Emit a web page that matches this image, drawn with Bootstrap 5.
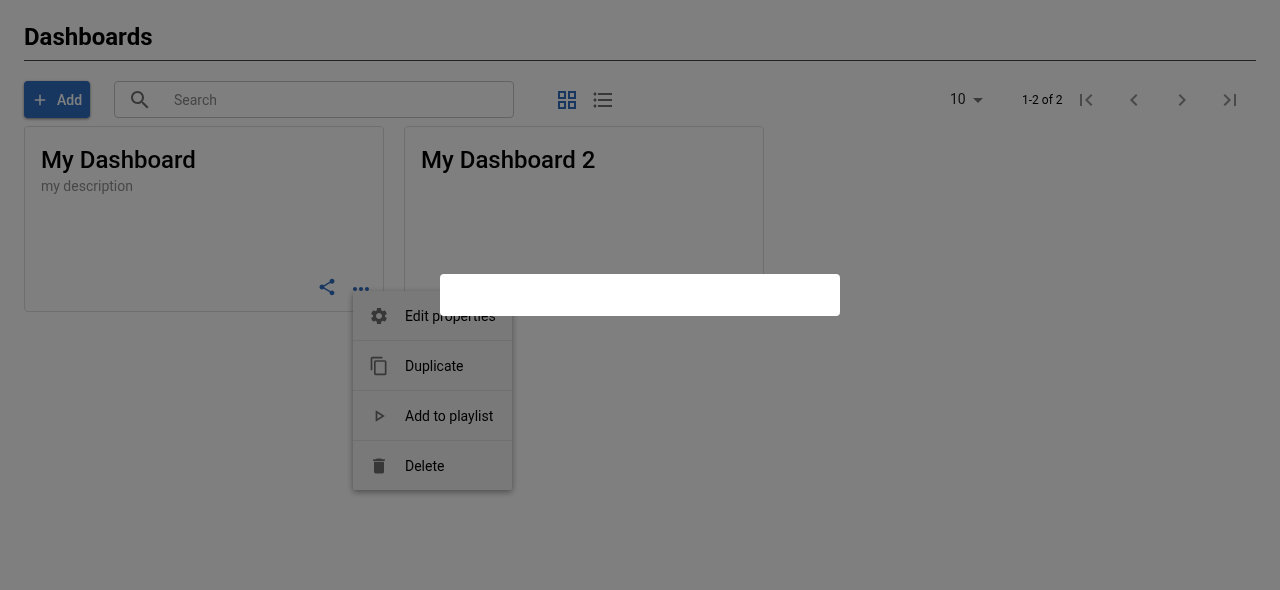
<!DOCTYPE html>
<html lang="en">
<head>
  <meta charset="UTF-8" />
  <meta name="viewport" content="width=device-width, initial-scale=1.0" />
  <title>Dashboards</title>
  <link href="https://cdn.jsdelivr.net/npm/bootstrap@5.3.0/dist/css/bootstrap.min.css" rel="stylesheet">
  <style>
    html, body {
      height: 100%;
      overflow: hidden;
    }
    body {
      font-family: Roboto, "Liberation Sans", sans-serif;
      background-color: #fff;
      color: #000;
    }
    .page-wrap {
      padding: 0 24px;
      will-change: transform;
    }
    .page-head {
      height: 61px;
      padding-top: 21px;
      border-bottom: 1px solid #444;
    }
    .page-head h1 {
      font-size: 24px;
      line-height: 32px;
      font-weight: 700;
      margin: 0;
    }
    .tool-row {
      height: 37px;
      margin-top: 20px;
      margin-bottom: 8px;
    }
    .add-btn {
      width: 66px;
      height: 37px;
      padding: 1px 0 0 7px;
      font-size: 14px;
      font-weight: 500;
      background-color: #2e6ec0;
      border: 0;
      border-radius: 4px;
      color: #fff;
      box-shadow: 0 1px 3px rgba(0, 0, 0, .5);
      gap: 8px;
    }
    .search-box {
      width: 400px;
      height: 37px;
      margin-left: 24px;
      border: 1px solid #c4c4c4;
      border-radius: 4px;
      padding-left: 13px;
      font-size: 14px;
      color: #8a8a8a;
      gap: 22px;
    }
    .search-box span {
      padding-top: 2px;
    }
    .view-btns {
      margin-left: 41px;
      gap: 12px;
    }
    .pager {
      margin-left: auto;
      margin-right: 2px;
      font-size: 12px;
    }
    .pager-size {
      width: 72px;
      font-size: 14px;
      color: #222;
    }
    .pager-caret {
      width: 0;
      height: 0;
      margin-left: 7px;
      margin-top: 1px;
      border-left: 5px solid transparent;
      border-right: 5px solid transparent;
      border-top: 5px solid #757575;
    }
    .pager-count {
      width: 40px;
      padding-top: 1px;
      white-space: nowrap;
    }
    .pager-btn {
      width: 48px;
    }
    .ico {
      display: block;
      width: 24px;
      height: 24px;
      fill: currentColor;
      flex: none;
    }
    .ico-grey {
      color: #929292;
    }
    .ico-dark {
      color: #6e6e6e;
    }
    .ico-blue {
      color: #2e6ec0;
    }
    .ico-add {
      width: 18px;
      height: 18px;
    }
    .ico-share {
      width: 20px;
      height: 20px;
      margin: 2px;
    }
    .ico-more {
      margin-top: 2px;
    }
    .dash-cards {
      gap: 20px;
    }
    .dash-card {
      width: 360px;
      height: 186px;
      border: 1px solid #ddd;
      border-radius: 4px;
      padding: 16px;
      background: transparent;
    }
    .dash-card h2 {
      font-size: 24px;
      line-height: 34px;
      font-weight: 500;
      margin: 0;
    }
    .dash-card p {
      font-size: 14px;
      line-height: 18px;
      margin: 0;
      color: #8f8f8f;
    }
    .card-tools {
      margin-top: auto;
      margin-right: -6px;
      margin-bottom: -4px;
      gap: 10px;
      height: 24px;
    }
    .card-menu {
      position: absolute;
      left: 353px;
      top: 291px;
      width: 159px;
      background-color: #f2f2f2;
      border-radius: 2px;
      box-shadow: 0 2px 6px rgba(0, 0, 0, .4);
      will-change: transform;
    }
    .card-menu .list-group-item {
      height: 50px;
      background: transparent;
      border-color: #e0e0e0;
      padding: 1px 0 0 16px;
      font-size: 14px;
      color: #000;
      gap: 16px;
    }
    .card-menu .list-group-item:last-child {
      height: 49px;
    }
    .card-menu .ico {
      width: 20px;
      height: 20px;
    }
    .backdrop {
      position: fixed;
      inset: 0;
      background-color: rgba(0, 0, 0, .5);
    }
    .snack {
      position: fixed;
      left: 440px;
      top: 274px;
      width: 400px;
      height: 42px;
      background-color: #fff;
      border-radius: 4px;
    }
  </style>
</head>
<body>
  <div class="page-wrap">
    <div class="page-head">
      <h1>Dashboards</h1>
    </div>

    <div class="tool-row d-flex align-items-center">
      <button class="btn add-btn d-flex align-items-center" type="button">
        <svg class="ico ico-add" viewBox="0 0 24 24"><path d="M19 13h-6v6h-2v-6H5v-2h6V5h2v6h6v2z"/></svg>
        Add
      </button>
      <div class="search-box d-flex align-items-center">
        <svg class="ico ico-dark" viewBox="0 0 24 24"><path d="M15.5 14h-.79l-.28-.27C15.41 12.59 16 11.11 16 9.5 16 5.91 13.09 3 9.5 3S3 5.91 3 9.5 5.91 16 9.5 16c1.61 0 3.09-.59 4.23-1.57l.27.28v.79l5 4.99L20.49 19l-4.99-5zm-6 0C7.01 14 5 11.99 5 9.5S7.01 5 9.5 5 14 7.01 14 9.5 11.99 14 9.5 14z"/></svg>
        <span>Search</span>
      </div>
      <div class="view-btns d-flex align-items-center">
        <svg class="ico ico-blue" viewBox="0 0 24 24"><path d="M3 3v8h8V3H3zm6 6H5V5h4v4zm-6 4v8h8v-8H3zm6 6H5v-4h4v4zm4-16v8h8V3h-8zm6 6h-4V5h4v4zm-6 4v8h8v-8h-8zm6 6h-4v-4h4v4z"/></svg>
        <svg class="ico ico-dark" viewBox="0 0 24 24"><path d="M4 10.5c-.83 0-1.5.67-1.5 1.5s.67 1.5 1.5 1.5 1.5-.67 1.5-1.5-.67-1.5-1.5-1.5zm0-6c-.83 0-1.5.67-1.5 1.5S3.17 7.5 4 7.5 5.5 6.83 5.5 6 4.83 4.5 4 4.5zm0 12c-.83 0-1.5.68-1.5 1.5s.68 1.5 1.5 1.5 1.5-.68 1.5-1.5-.67-1.5-1.5-1.5zM7 19h14v-2H7v2zm0-6h14v-2H7v2zm0-8v2h14V5H7z"/></svg>
      </div>
      <div class="pager d-flex align-items-center">
        <div class="pager-size d-flex align-items-center">10<span class="pager-caret"></span></div>
        <div class="pager-count">1-2 of 2</div>
        <div class="pager-btn d-flex justify-content-center ico-grey"><svg class="ico" viewBox="0 0 24 24"><path d="M18.41 16.59L13.82 12l4.59-4.59L17 6l-6 6 6 6zM6 6h2v12H6z"/></svg></div>
        <div class="pager-btn d-flex justify-content-center ico-grey"><svg class="ico" viewBox="0 0 24 24"><path d="M15.41 7.41L14 6l-6 6 6 6 1.41-1.41L10.83 12z"/></svg></div>
        <div class="pager-btn d-flex justify-content-center ico-grey"><svg class="ico" viewBox="0 0 24 24"><path d="M10 6L8.59 7.41 13.17 12l-4.58 4.59L10 18l6-6z"/></svg></div>
        <div class="pager-btn d-flex justify-content-center ico-grey"><svg class="ico" viewBox="0 0 24 24"><path d="M5.59 7.41L10.18 12l-4.59 4.59L7 18l6-6-6-6zM16 6h2v12h-2z"/></svg></div>
      </div>
    </div>

    <div class="dash-cards d-flex">
      <div class="card dash-card">
        <h2>My Dashboard</h2>
        <p>my description</p>
        <div class="card-tools d-flex justify-content-end ico-blue">
          <svg class="ico ico-share" viewBox="0 0 24 24"><path d="M18 16.08c-.76 0-1.44.3-1.96.77L8.91 12.7c.05-.23.09-.46.09-.7s-.04-.47-.09-.7l7.05-4.11c.54.5 1.25.81 2.04.81 1.66 0 3-1.34 3-3s-1.34-3-3-3-3 1.34-3 3c0 .24.04.47.09.7L8.04 9.81C7.5 9.31 6.79 9 6 9c-1.66 0-3 1.34-3 3s1.34 3 3 3c.79 0 1.5-.31 2.04-.81l7.12 4.16c-.05.21-.08.43-.08.65 0 1.61 1.31 2.92 2.92 2.92 1.61 0 2.92-1.31 2.92-2.92s-1.31-2.92-2.92-2.92z"/></svg>
          <svg class="ico ico-more" viewBox="0 0 24 24"><path d="M6 10c-1.1 0-2 .9-2 2s.9 2 2 2 2-.9 2-2-.9-2-2-2zm12 0c-1.1 0-2 .9-2 2s.9 2 2 2 2-.9 2-2-.9-2-2-2zm-6 0c-1.1 0-2 .9-2 2s.9 2 2 2 2-.9 2-2-.9-2-2-2z"/></svg>
        </div>
      </div>
      <div class="card dash-card">
        <h2>My Dashboard 2</h2>
      </div>
    </div>
  </div>

  <div class="card-menu list-group list-group-flush">
    <div class="list-group-item d-flex align-items-center">
      <svg class="ico ico-dark" viewBox="0 0 24 24"><path d="M19.14 12.94c.04-.3.06-.61.06-.94 0-.32-.02-.64-.07-.94l2.03-1.58c.18-.14.23-.41.12-.61l-1.92-3.32c-.12-.22-.37-.29-.59-.22l-2.39.96c-.5-.38-1.03-.7-1.62-.94l-.36-2.54c-.04-.24-.24-.41-.48-.41h-3.84c-.24 0-.43.17-.47.41l-.36 2.54c-.59.24-1.13.57-1.62.94l-2.39-.96c-.22-.08-.47 0-.59.22L2.74 8.87c-.12.21-.08.47.12.61l2.03 1.58c-.05.3-.09.63-.09.94s.02.64.07.94l-2.03 1.58c-.18.14-.23.41-.12.61l1.92 3.32c.12.22.37.29.59.22l2.39-.96c.5.38 1.03.7 1.62.94l.36 2.54c.05.24.24.41.48.41h3.84c.24 0 .44-.17.47-.41l.36-2.54c.59-.24 1.13-.56 1.62-.94l2.39.96c.22.08.47 0 .59-.22l1.92-3.32c.12-.22.07-.47-.12-.61l-2.01-1.58zM12 15.6c-1.98 0-3.6-1.62-3.6-3.6s1.62-3.6 3.6-3.6 3.6 1.62 3.6 3.6-1.62 3.6-3.6 3.6z"/></svg>
      Edit properties
    </div>
    <div class="list-group-item d-flex align-items-center">
      <svg class="ico ico-dark" viewBox="0 0 24 24"><path d="M16 1H4c-1.1 0-2 .9-2 2v14h2V3h12V1zm3 4H8c-1.1 0-2 .9-2 2v14c0 1.1.9 2 2 2h11c1.1 0 2-.9 2-2V7c0-1.1-.9-2-2-2zm0 16H8V7h11v14z"/></svg>
      Duplicate
    </div>
    <div class="list-group-item d-flex align-items-center">
      <svg class="ico ico-dark" viewBox="0 0 24 24"><path d="M10 8.64L15.27 12 10 15.36V8.64M8 5v14l11-7L8 5z"/></svg>
      Add to playlist
    </div>
    <div class="list-group-item d-flex align-items-center">
      <svg class="ico ico-dark" viewBox="0 0 24 24"><path d="M6 19c0 1.1.9 2 2 2h8c1.1 0 2-.9 2-2V7H6v12zM19 4h-3.5l-1-1h-5l-1 1H5v2h14V4z"/></svg>
      Delete
    </div>
  </div>

  <div class="backdrop"></div>
  <div class="snack"></div>

  <script src="https://cdn.jsdelivr.net/npm/bootstrap@5.3.0/dist/js/bootstrap.bundle.min.js"></script>
</body>
</html>
